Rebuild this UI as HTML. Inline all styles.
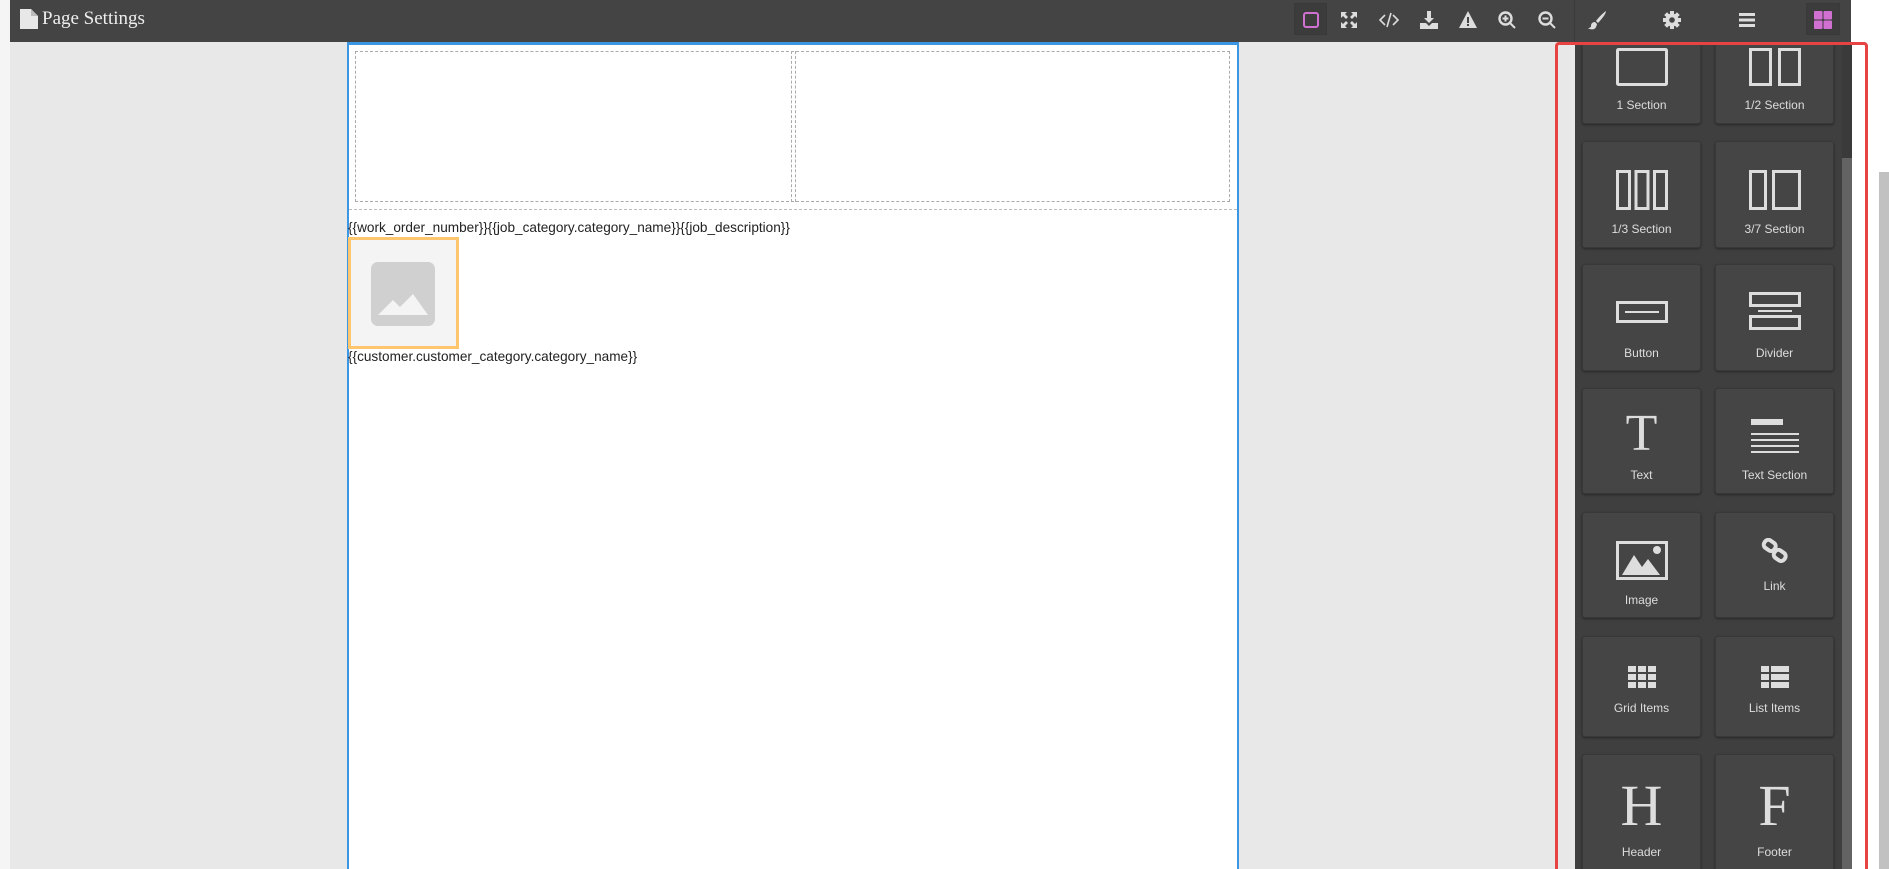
<!DOCTYPE html>
<html><head><style>
*{margin:0;padding:0;box-sizing:border-box}
html,body{width:1889px;height:869px;overflow:hidden}
body{background:#e8e8e8;font-family:"Liberation Sans",Arial,sans-serif}
#w{position:relative;width:1889px;height:869px;overflow:hidden}
.a{position:absolute}
#top{left:10px;top:0;width:1841px;height:42px;background:#444}
.ic{position:absolute;top:10px;width:20px;height:20px;transform:translateX(-10px)}
.tile{position:absolute;width:119px;background:#454545;border:1px solid #383838;border-radius:3px;box-shadow:0 1px 2px rgba(0,0,0,.4);color:#ddd;font-size:12px;text-align:center}
.tile .l{position:absolute;left:0;right:0}
.tile svg{position:absolute;left:50%;transform:translateX(-50%)}
.txt{font-size:13.6px;color:#222;white-space:nowrap}
</style></head><body><div id="w">
<div class="a" style="left:0;top:0;width:10px;height:869px;background:#f5f5f5"></div>
<div class="a" style="left:1851px;top:0;width:38px;height:869px;background:#fff"></div>
<div class="a" style="left:1879px;top:172px;width:10px;height:697px;background:#c1c1c1"></div>

<!-- canvas page -->
<div class="a" style="left:347px;top:42px;width:892px;height:827px;background:#fff;border-left:2px solid #3b97e3;border-right:2px solid #3b97e3;border-top:3px solid #3b97e3"></div>
<div class="a" style="left:355px;top:51px;width:875px;height:151px;border:1px dashed #aaa"></div>
<div class="a" style="left:791px;top:51px;width:5px;height:151px;border-left:1px dashed #aaa;border-right:1px dashed #aaa"></div>
<div class="a" style="left:349px;top:209px;width:888px;border-top:1px dashed #bbb"></div>
<div class="a txt" style="left:348px;top:220px">{{work_order_number}}{{job_category.category_name}}{{job_description}}</div>
<div class="a" style="left:348px;top:237px;width:111px;height:112px;background:#f4f4f4;border:3px solid #ffc66d"></div>
<svg class="a" style="left:371px;top:262px" width="64" height="64" viewBox="0 0 64 64"><rect width="64" height="64" rx="7" fill="#d0d0d0"/><path d="M7 53L22 38L29 45L42 32L57 53Z" fill="#f4f4f4"/></svg>
<div class="a txt" style="left:348px;top:349px">{{customer.customer_category.category_name}}</div>

<!-- right panel -->
<div class="a" style="left:1555px;top:42px;width:20px;height:827px;background:#e8e8e8"></div>
<div class="a" style="left:1575px;top:42px;width:267px;height:827px;background:#3f3f3f"></div>
<div class="a" style="left:1842px;top:42px;width:10px;height:827px;background:#3a3a3a"></div>
<div class="a" style="left:1842px;top:158px;width:10px;height:711px;background:#636363"></div>

<div class="tile" style="left:1582px;top:18px;height:106px"><svg style="top:29px" width="52" height="38"><rect x="1.5" y="1.5" width="49" height="35" fill="none" stroke="#ddd" stroke-width="3" rx="1"/></svg><div class="l" style="top:79px">1 Section</div></div>
<div class="tile" style="left:1715px;top:18px;height:106px"><svg style="top:29px" width="52" height="38" fill="none" stroke="#ddd" stroke-width="3"><rect x="1.5" y="1.5" width="20" height="35"/><rect x="30.5" y="1.5" width="20" height="35"/></svg><div class="l" style="top:79px">1/2 Section</div></div>

<div class="tile" style="left:1582px;top:141px;height:107px"><svg style="top:28px" width="52" height="40" fill="none" stroke="#ddd" stroke-width="3"><rect x="1.5" y="1.5" width="12" height="37"/><rect x="20" y="1.5" width="12" height="37"/><rect x="38.5" y="1.5" width="12" height="37"/></svg><div class="l" style="top:80px">1/3 Section</div></div>
<div class="tile" style="left:1715px;top:141px;height:107px"><svg style="top:28px" width="52" height="40" fill="none" stroke="#ddd" stroke-width="3"><rect x="1.5" y="1.5" width="15" height="37"/><rect x="24.5" y="1.5" width="26" height="37"/></svg><div class="l" style="top:80px">3/7 Section</div></div>

<div class="tile" style="left:1582px;top:264px;height:107px"><svg style="top:36px" width="52" height="22" fill="none" stroke="#ddd" stroke-width="3"><rect x="1.5" y="1.5" width="49" height="19"/><path d="M9 11H43" stroke-width="2"/></svg><div class="l" style="top:81px">Button</div></div>
<div class="tile" style="left:1715px;top:264px;height:107px"><svg style="top:27px" width="52" height="38" fill="none" stroke="#ddd" stroke-width="3"><rect x="1.5" y="1.5" width="49" height="12"/><rect x="1.5" y="24.5" width="49" height="12"/><path d="M9 19H43" stroke-width="2"/></svg><div class="l" style="top:81px">Divider</div></div>

<div class="tile" style="left:1582px;top:388px;height:106px"><div class="l" style="top:19px;font-family:'Liberation Serif',serif;font-size:52px;line-height:52px">T</div><div class="l" style="top:79px">Text</div></div>
<div class="tile" style="left:1715px;top:388px;height:106px"><svg style="top:30px" width="50" height="38" fill="#ddd"><rect x="1" y="0" width="32" height="6"/><rect x="1" y="14" width="48" height="2"/><rect x="1" y="20" width="48" height="2"/><rect x="1" y="26" width="48" height="2"/><rect x="1" y="32" width="48" height="2"/></svg><div class="l" style="top:79px">Text Section</div></div>

<div class="tile" style="left:1582px;top:512px;height:106px"><svg style="top:28px" width="52" height="40"><rect x="1.5" y="1.5" width="49" height="36" fill="none" stroke="#ddd" stroke-width="3"/><path d="M6 34L18 14L26 26L32 18L44 34Z" fill="#ddd"/><circle cx="41" cy="9" r="4" fill="#ddd"/></svg><div class="l" style="top:80px">Image</div></div>
<div class="tile" style="left:1715px;top:512px;height:106px"><svg style="top:25px" width="28" height="26" fill="none" stroke="#ddd" stroke-width="4"><rect x="3" y="3" width="12" height="9" rx="4" transform="rotate(35 9 7)"/><rect x="13" y="13" width="12" height="9" rx="4" transform="rotate(35 19 17)"/></svg><div class="l" style="top:66px">Link</div></div>

<div class="tile" style="left:1582px;top:636px;height:101px"><svg style="top:29px" width="28" height="22" fill="#ddd"><rect x="0" y="0" width="8" height="6"/><rect x="10" y="0" width="8" height="6"/><rect x="20" y="0" width="8" height="6"/><rect x="0" y="8" width="8" height="6"/><rect x="10" y="8" width="8" height="6"/><rect x="20" y="8" width="8" height="6"/><rect x="0" y="16" width="8" height="6"/><rect x="10" y="16" width="8" height="6"/><rect x="20" y="16" width="8" height="6"/></svg><div class="l" style="top:64px">Grid Items</div></div>
<div class="tile" style="left:1715px;top:636px;height:101px"><svg style="top:29px" width="28" height="22" fill="#ddd"><rect x="0" y="0" width="8" height="6"/><rect x="10" y="0" width="18" height="6"/><rect x="0" y="8" width="8" height="6"/><rect x="10" y="8" width="18" height="6"/><rect x="0" y="16" width="8" height="6"/><rect x="10" y="16" width="18" height="6"/></svg><div class="l" style="top:64px">List Items</div></div>

<div class="tile" style="left:1582px;top:754px;height:130px"><div class="l" style="top:22px;font-family:'Liberation Serif',serif;font-size:58px;line-height:58px">H</div><div class="l" style="top:90px">Header</div></div>
<div class="tile" style="left:1715px;top:754px;height:130px"><div class="l" style="top:22px;font-family:'Liberation Serif',serif;font-size:58px;line-height:58px">F</div><div class="l" style="top:90px">Footer</div></div>

<div class="a" style="left:1555px;top:42px;width:313px;height:840px;border:3px solid #e84343;border-radius:4px"></div>

<!-- top bar -->
<div id="top" class="a"></div>
<svg class="a" style="left:20px;top:9px" width="18" height="20" viewBox="0 0 18 20"><path d="M0 0H11L18 7V20H0Z" fill="#e8e8e8"/><path d="M11 0V7H18" fill="#bbb"/></svg>
<div class="a" style="left:42px;top:8px;color:#eee;font-family:'Liberation Serif',serif;font-size:19px">Page Settings</div>
<div class="a" style="left:1294px;top:3px;width:33px;height:32px;background:#3c3c3c;border:1px solid #393939"></div>
<div class="a" style="left:1806px;top:3px;width:34px;height:32px;background:#3c3c3c;border:1px solid #393939"></div>
<div class="a" style="left:1574px;top:0;width:1px;height:42px;background:#3a3a3a"></div>
<svg class="ic" style="left:1311px" viewBox="0 0 20 20"><rect x="3" y="3" width="14" height="14" rx="2" fill="none" stroke="#d070d0" stroke-width="2"/></svg>
<svg class="ic" style="left:1349px" viewBox="0 0 20 20" fill="#ddd"><path d="M2 2H8L6 4L9 7L7 9L4 6L2 8ZM18 2V8L16 6L13 9L11 7L14 4L12 2ZM2 18V12L4 14L7 11L9 13L6 16L8 18ZM18 18H12L14 16L11 13L13 11L16 14L18 12Z"/></svg>
<svg class="ic" style="left:1389px" viewBox="0 0 20 20" fill="none" stroke="#ddd" stroke-width="1.6"><path d="M6 5L1 10L6 15M14 5L19 10L14 15M12 3L8 17"/></svg>
<svg class="ic" style="left:1429px" viewBox="0 0 20 20" fill="#ddd"><path d="M8 1H12V8H15L10 13L5 8H8ZM1 13H7L10 16L13 13H19V19H1Z"/></svg>
<svg class="ic" style="left:1468px" viewBox="0 0 20 20"><path d="M10 1L19 18H1Z" fill="#ddd"/><rect x="9" y="7" width="2" height="6" fill="#444"/><rect x="9" y="14" width="2" height="2" fill="#444"/></svg>
<svg class="ic" style="left:1507px" viewBox="0 0 20 20" fill="none" stroke="#ddd" stroke-width="2.4"><circle cx="8.5" cy="8.5" r="6"/><path d="M13 13L18 18M5.5 8.5H11.5M8.5 5.5V11.5" stroke-width="2"/></svg>
<svg class="ic" style="left:1547px" viewBox="0 0 20 20" fill="none" stroke="#ddd" stroke-width="2.4"><circle cx="8.5" cy="8.5" r="6"/><path d="M13 13L18 18M5.5 8.5H11.5" stroke-width="2"/></svg>
<svg class="ic" style="left:1597px" viewBox="0 0 20 20" fill="#ddd"><path d="M19 1C17 2 11 8 9 11L11 13C14 10 19 4 19 1ZM8 12C5 12 4 14 4 16C4 17 3 18 1 18C3 20 8 20 9 17C10 15 10 14 10 14Z"/></svg>
<svg class="ic" style="left:1672px" viewBox="0 0 20 20"><g fill="#ddd"><circle cx="10" cy="10" r="6.5"/><rect x="8" y="1" width="4" height="18"/><rect x="1" y="8" width="18" height="4"/><rect x="8" y="1" width="4" height="18" transform="rotate(45 10 10)"/><rect x="8" y="1" width="4" height="18" transform="rotate(-45 10 10)"/></g><circle cx="10" cy="10" r="2.8" fill="#444"/></svg>
<svg class="ic" style="left:1747px" viewBox="0 0 20 20" fill="#ddd"><rect x="2" y="3" width="16" height="3"/><rect x="2" y="8.5" width="16" height="3"/><rect x="2" y="14" width="16" height="3"/></svg>
<svg class="ic" style="left:1823px" viewBox="0 0 20 20" fill="#d070d0"><rect x="1" y="1" width="8.5" height="8.5" rx="1"/><rect x="10.5" y="1" width="8.5" height="8.5" rx="1"/><rect x="1" y="10.5" width="8.5" height="8.5" rx="1"/><rect x="10.5" y="10.5" width="8.5" height="8.5" rx="1"/></svg>
</div></body></html>
